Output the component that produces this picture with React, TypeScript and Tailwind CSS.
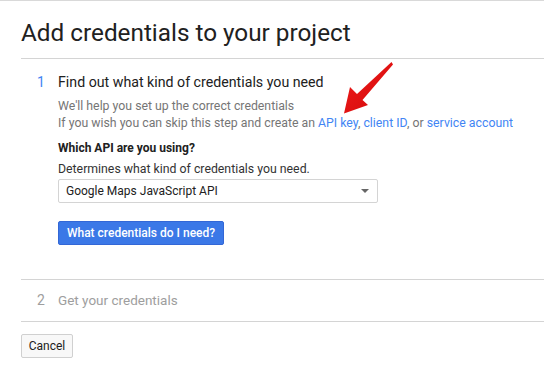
const Arrow = () => (
    <svg className="absolute left-0 top-0 pointer-events-none" width="544" height="372" viewBox="0 0 544 372">
        <defs>
            <linearGradient id="ar" x1="0" y1="0" x2="1" y2="1">
                <stop offset="0" stopColor="#f01b1b" />
                <stop offset="1" stopColor="#d20a0a" />
            </linearGradient>
        </defs>
        <polygon
            points="344,112.5 350,86 357,93 391.5,61 393,63.5 362.5,99 368,104"
            fill="url(#ar)"
        />
    </svg>
);

const App = () => {
    return (
        <div className="relative w-[544px] h-[372px] overflow-hidden bg-white border-t border-[#d9d9d9] font-['Roboto',sans-serif]">
            <div className="pl-[21px]">
                <h1 className="pt-[19px] pb-[13px] text-[24.3px] leading-[25px] text-[#212121] border-b border-[#d4d4d4]">
                    Add credentials to your project
                </h1>

                <div className="flex pl-[16px] pt-[13px] pb-[34px] border-b border-[#d4d4d4]">
                    <div className="w-[21px] text-[14px] leading-[20px] text-[#4285f4]">1</div>
                    <div className="flex-1">
                        <div className="text-[14.2px] leading-[20px] text-[#212121]">
                            Find out what kind of credentials you need
                        </div>
                        <div className="mt-[6px] text-[12.3px] leading-[17px] text-[#757575]">
                            <div>We'll help you set up the correct credentials</div>
                            <div>
                                If you wish you can skip this step and create an{" "}
                                <span className="text-[#4285f4]">API key</span>,{" "}
                                <span className="text-[#4285f4]">client ID</span>, or{" "}
                                <span className="text-[#4285f4]">service account</span>
                            </div>
                        </div>
                        <div className="mt-[8px] text-[12px] leading-[16px] font-bold text-[#212121]">
                            Which API are you using?
                        </div>
                        <div className="mt-[5px] text-[12.3px] leading-[16px] text-[#333]">
                            Determines what kind of credentials you need.
                        </div>
                        <div className="mt-[2px] flex items-center justify-between w-[320px] h-[24px] pl-[7px] pr-[8px] border border-[#d4d4d4] rounded-[2px] text-[12px] text-[#212121]">
                            <span>Google Maps JavaScript API</span>
                            <span className="w-0 h-0 border-l-[4px] border-r-[4px] border-t-[4px] border-l-transparent border-r-transparent border-t-[#666]" />
                        </div>
                        <button className="mt-[18px] h-[24px] w-[166px] rounded-[2px] bg-[#3b78e7] border border-[#3367d6] text-white text-[12px] font-medium">
                            What credentials do I need?
                        </button>
                    </div>
                </div>

                <div className="flex items-center h-[42px] pl-[16px] border-b border-[#d4d4d4] text-[#9e9e9e]">
                    <div className="w-[21px] text-[14px]">2</div>
                    <div className="text-[13.5px]">Get your credentials</div>
                </div>

                <button className="mt-[12px] h-[24px] w-[52px] rounded-[2px] border border-[#d0d0d0] bg-[#f8f8f8] text-[12px] text-[#212121]">
                    Cancel
                </button>
            </div>
            <Arrow />
        </div>
    );
};

export default App;
